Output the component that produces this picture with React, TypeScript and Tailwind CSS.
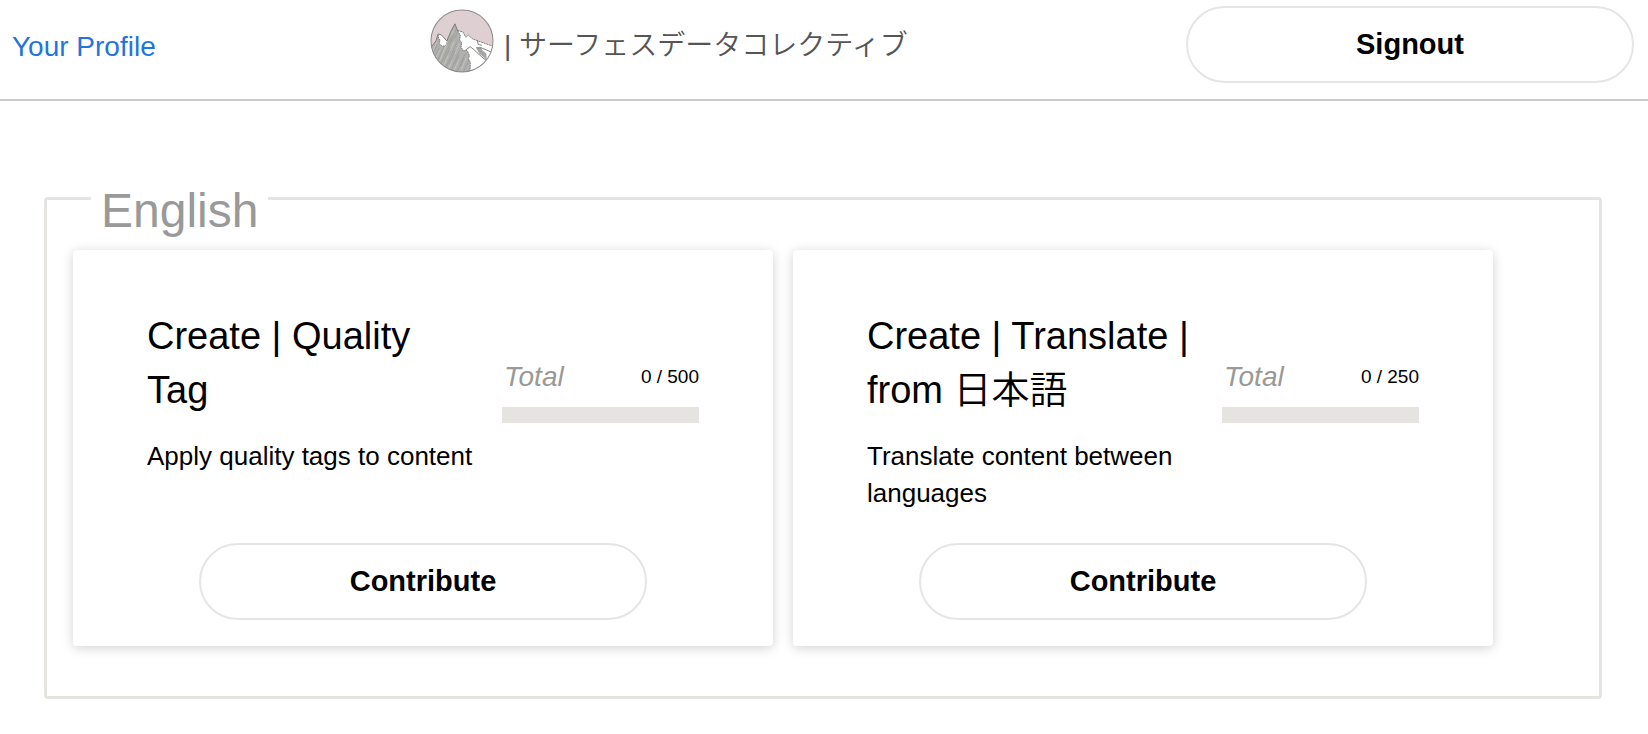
import React from "react";

type Task = {
  id: string;
  title: string;
  description: string;
  done: number;
  total: number;
};

const tasks: Task[] = [
  {
    id: "quality",
    title: "Create | Quality Tag",
    description: "Apply quality tags to content",
    done: 0,
    total: 500,
  },
  {
    id: "translate",
    title: "Create | Translate | from 日本語",
    description: "Translate content between languages",
    done: 0,
    total: 250,
  },
];

function Logo() {
  return (
    <svg viewBox="30 24 190 190" className="-mt-2 size-16 shrink-0" aria-hidden="true">
      <defs>
        <clipPath id="disc">
          <circle cx="125" cy="119" r="92" />
        </clipPath>
        <clipPath id="shade">
          <path d="M20 145 L37 133 L48 118 L54 100 L56 112 L60 116 L57 126 L66 135 L76 132 L80 119 L92 90 L104 68 L110 83 L114 92 L120 103 L118 116 L124 124 L122 138 L130 149 L137 145 L142 151 L147 163 L144 172 L150 182 L148 220 H20Z" />
        </clipPath>
      </defs>
      <g clipPath="url(#disc)">
        <rect x="30" y="24" width="190" height="190" fill="#decfd3" />
        <path
          d="M20 145 L37 133 L48 118 L54 98 L64 101 L72 110 L80 119 L92 90 L104 68 L112 88 L128 92 L136 108 L144 102 L158 114 L166 116 L172 119 L190 125 L225 136 V220 H20Z"
          fill="#fff"
        />
        <g clipPath="url(#shade)">
          <rect x="20" y="60" width="140" height="160" fill="#b0b0ae" />
          <path
            d="M38 150 L50 122 M46 172 L58 146 M54 188 L80 128 M68 198 L84 162 M90 148 L102 120 M84 204 L96 176 M104 158 L118 126 M102 206 L116 174 M122 206 L138 168 M90 112 L100 88"
            stroke="#cdcdcb"
            strokeWidth="2"
          />
          <path
            d="M34 168 L52 128 M44 168 L56 140 M50 184 L72 134 M60 192 L96 112 M70 182 L90 138 M76 200 L112 118 M86 188 L104 148 M92 208 L118 146 M104 188 L116 160 M110 210 L134 158 M120 194 L132 168 M128 214 L146 174 M92 122 L108 84 M82 130 L96 100 M102 112 L112 92"
            stroke="#969694"
            strokeWidth="2"
          />
        </g>
        <path
          d="M167 139 L182 139 L186 147 L197 155 L199 178 L188 166 L176 156Z"
          fill="#a5a5a3"
        />
        <g fill="none" stroke="#6c6c6a" strokeWidth="2.5" strokeLinejoin="round">
          <path d="M32 138 L37 133 L48 118 L54 98 L64 101 L72 110 L80 119 L92 90 L104 68 L112 88" />
          <path
            d="M112 88 L128 92 L136 108 L144 102 L158 114 L166 116 L172 119 L190 125 L218 135"
            strokeDasharray="6 2"
          />
          <path d="M54 100 L56 112 L60 116 L57 126 L66 135 L76 132" strokeDasharray="5 2" />
          <path
            d="M112 88 L120 103 L118 116 L124 124 L122 138 L130 149 L137 145 L142 151 L147 163 L144 172 L150 182 L149 212"
            strokeDasharray="5 2"
          />
          <path d="M137 145 L149 136 L160 144 L170 154 L184 166 L202 182" />
          <path d="M167 139 L182 139 L210 151 M171 117 L173 129 L184 132" />
        </g>
      </g>
      <circle cx="125" cy="119" r="92" fill="none" stroke="#8d898a" strokeWidth="3" />
    </svg>
  );
}

function PillButton({ children }: { children: React.ReactNode }) {
  return (
    <button
      type="button"
      className="h-[77px] w-[448px] max-w-full shrink-0 cursor-pointer rounded-full border-2 border-[#e5e5e5] bg-white text-[29px] font-bold text-black"
    >
      {children}
    </button>
  );
}

function TaskCard({ task }: { task: Task }) {
  const percent = (task.done / task.total) * 100;
  return (
    <article className="flex w-[700px] max-w-full flex-col rounded bg-white px-[74px] pt-[59px] pb-[26px] shadow-[0_2px_12px_rgba(0,0,0,0.18)]">
      <div className="flex gap-6">
        <div className="flex-1">
          <h2 className="text-[38px] leading-[54px] font-[350]">{task.title}</h2>
          <p className="mt-[21px] text-[26px] leading-[37px]">{task.description}</p>
        </div>
        <div className="w-[197px] shrink-0 pt-12">
          <div className="flex items-center justify-between">
            <span id={task.id} className="pl-0.5 text-[28px] leading-10 text-[#999] italic">
              Total
            </span>
            <span className="text-[19px]">
              {task.done} / {task.total}
            </span>
          </div>
          <div
            role="progressbar"
            aria-labelledby={task.id}
            aria-valuenow={task.done}
            aria-valuemax={task.total}
            className="mt-2.5 h-4 bg-[#e5e4e0]"
          >
            <div className="h-full bg-[#1f75dd]" style={{ width: `${percent}%` }} />
          </div>
        </div>
      </div>
      <div className="mt-auto flex justify-center pt-[31px]">
        <PillButton>Contribute</PillButton>
      </div>
    </article>
  );
}

export default function App() {
  return (
    <div className="bg-white font-['Liberation_Sans','Noto_Sans_CJK_JP',sans-serif] text-black">
      <header className="flex items-center justify-between border-b-2 border-[#cbcbcb] pt-1.5 pr-3.5 pb-4 pl-3">
        <a href="#profile" className="pt-1 text-[28px] text-[#1f75dd]">
          Your Profile
        </a>
        <div className="flex items-center gap-2.5">
          <Logo />
          <span className="pt-0.5 pr-1 text-[28px] font-[350] text-[#555]">
            | サーフェスデータコレクティブ
          </span>
        </div>
        <PillButton>Signout</PillButton>
      </header>
      <main className="pt-[61px] pr-[46px] pb-8 pl-11">
        <fieldset className="rounded border-3 border-[#e5e4e0] px-[26px] pt-[15px] pb-[50px]">
          <legend className="ml-[18px] px-2.5 pt-6 text-5xl leading-[49px] text-[#999]">
            English
          </legend>
          <div className="flex flex-wrap gap-5">
            {tasks.map((task) => (
              <TaskCard key={task.id} task={task} />
            ))}
          </div>
        </fieldset>
      </main>
    </div>
  );
}
